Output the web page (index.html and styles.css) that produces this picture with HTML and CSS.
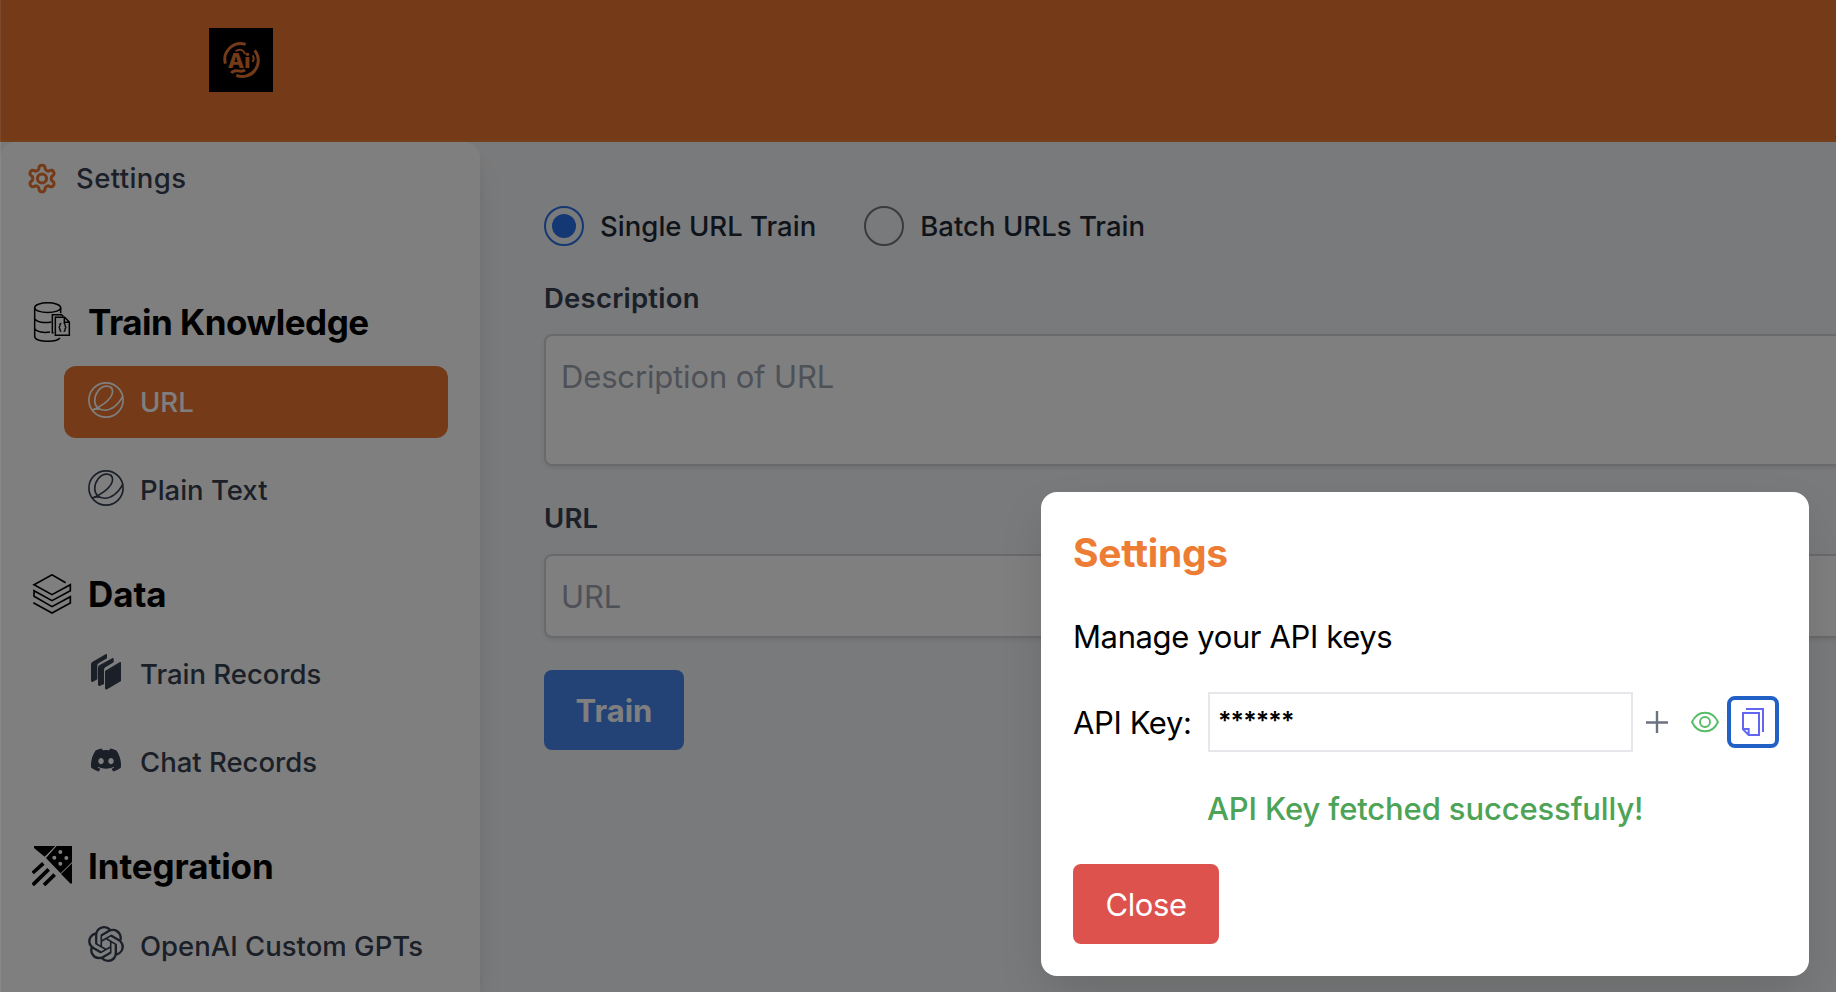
FILE: index.html
```
<!DOCTYPE html>
<html lang="en">
<head>
<meta charset="utf-8">
<title>Settings</title>
<link rel="stylesheet" href="styles.css">
</head>
<body>
<div class="app">
  <header class="header">
    <svg class="logo" viewBox="0 0 192 192">
      <rect width="192" height="192" fill="#000"/>
      <g fill="none" stroke="#ea7632" stroke-width="9">
        <path d="M110 49A48 48 0 0 0 49 107"/>
        <path d="M137 67A48 48 0 0 1 82 142"/>
        <path d="M67 135C78 118 92 137 108 126"/>
        <path d="M80 70C92 60 104 66 108 78" stroke-width="6"/>
        <path d="M131 82q6 8 0 20" stroke-width="6"/>
      </g>
      <text class="logo-text" x="56" y="119" textLength="68" lengthAdjust="spacingAndGlyphs">Ai</text>
    </svg>
  </header>
  <div class="body">
    <nav class="sidebar">
      <a class="settings-link">
        <svg class="gear" viewBox="0 0 24 24" fill="none" stroke="currentColor" stroke-width="2.3" stroke-linejoin="round"><path d="M12.22 2h-.44a2 2 0 0 0-2 2v.18a2 2 0 0 1-1 1.73l-.43.25a2 2 0 0 1-2 0l-.15-.08a2 2 0 0 0-2.73.73l-.22.38a2 2 0 0 0 .73 2.73l.15.1a2 2 0 0 1 1 1.72v.51a2 2 0 0 1-1 1.74l-.15.09a2 2 0 0 0-.73 2.73l.22.38a2 2 0 0 0 2.73.73l.15-.08a2 2 0 0 1 2 0l.43.25a2 2 0 0 1 1 1.73V20a2 2 0 0 0 2 2h.44a2 2 0 0 0 2-2v-.18a2 2 0 0 1 1-1.73l.43-.25a2 2 0 0 1 2 0l.15.08a2 2 0 0 0 2.73-.73l.22-.39a2 2 0 0 0-.73-2.73l-.15-.08a2 2 0 0 1-1-1.74v-.5a2 2 0 0 1 1-1.74l.15-.09a2 2 0 0 0 .73-2.73l-.22-.38a2 2 0 0 0-2.73-.73l-.15.08a2 2 0 0 1-2 0l-.43-.25a2 2 0 0 1-1-1.73V4a2 2 0 0 0-2-2z"/><circle cx="12" cy="12" r="3.4"/></svg>
        <span>Settings</span>
      </a>
      <section class="group">
        <h2 class="group-title">
          <svg class="group-icon" viewBox="0 0 120 120" fill="none" stroke="#000" stroke-width="4.5"><ellipse cx="47" cy="17" rx="39" ry="14.5"/><path d="M8 17V104C10 121 72 122 84 108M86 17V34M8 50C14 61 38 64 58 60M8 80C14 90 36 93 54 90"/><path d="M65 92H61V38H88L94 43"/><path d="M70 46H98L112 60V100H70ZM97 46V61H112"/><path d="M88 64q-5 0-4 6q0 5-4 6q4 1 4 6q-1 6 4 6M95 64q5 0 4 6q0 5 4 6q-4 1-4 6q1 6-4 6" stroke-width="4"/></svg>
          <span class="tight">Train Knowledge</span>
        </h2>
        <a class="item item-active">
          <svg class="item-icon" viewBox="0 0 24 24" fill="none" stroke="currentColor" stroke-width="1.1"><circle cx="12" cy="12" r="11.4"/><path d="M2.7 18.7C7 17.4 16.4 11.8 16.4 6.4C16.4 4 14.8 2.7 12.4 2.7C8 2.7 4.5 7.8 4.5 12.4C4.5 16.4 7.2 18.8 11 18.8C16.4 18.8 20.2 15 23.2 9.6M2.7 18.7C5 17.8 6.6 17.6 8.2 18.2"/></svg>
          <span>URL</span>
        </a>
        <a class="item">
          <svg class="item-icon" viewBox="0 0 24 24" fill="none" stroke="currentColor" stroke-width="1.1"><circle cx="12" cy="12" r="11.4"/><path d="M2.7 18.7C7 17.4 16.4 11.8 16.4 6.4C16.4 4 14.8 2.7 12.4 2.7C8 2.7 4.5 7.8 4.5 12.4C4.5 16.4 7.2 18.8 11 18.8C16.4 18.8 20.2 15 23.2 9.6M2.7 18.7C5 17.8 6.6 17.6 8.2 18.2"/></svg>
          <span>Plain Text</span>
        </a>
      </section>
      <section class="group">
        <h2 class="group-title">
          <svg class="group-icon" viewBox="0 0 120 120" fill="none" stroke="#000" stroke-width="5"><path d="M101 26L60 2.500L6 32L60 62L115 32V50L60 80L6 50V67L60 98L115 68V87L60 117L4 86"/></svg>
          <span>Data</span>
        </h2>
        <a class="item">
          <svg class="item-icon" viewBox="0 0 108 108" fill="currentColor" stroke="currentColor" stroke-width="4" stroke-linejoin="round"><path d="M53 52L97 26V80L55 105L53 103Z"/><path d="M32 41Q32 37 36 35L75 14V24L51 38Q46 41 46 47V89L34 94L32 92Z"/><path d="M11 31Q11 27 15 25L55 2V12L32 25Q26 28 26 34V75L13 82L11 80Z"/></svg>
          <span>Train Records</span>
        </a>
        <a class="item">
          <svg class="item-icon discord" viewBox="0 0 16 16" fill="currentColor"><path d="M13.545 2.907a13.227 13.227 0 0 0-3.257-1.011.05.05 0 0 0-.052.025c-.141.25-.297.577-.406.833a12.19 12.19 0 0 0-3.658 0 8.258 8.258 0 0 0-.412-.833.051.051 0 0 0-.052-.025c-1.125.194-2.22.534-3.257 1.011a.041.041 0 0 0-.021.018C.356 6.024-.213 9.047.066 12.032c.001.014.01.028.021.037a13.276 13.276 0 0 0 3.995 2.02.05.05 0 0 0 .056-.019c.308-.42.582-.863.818-1.329a.05.05 0 0 0-.01-.059.051.051 0 0 0-.018-.011 8.875 8.875 0 0 1-1.248-.595.05.05 0 0 1-.02-.066.051.051 0 0 1 .015-.019c.084-.063.168-.129.248-.195a.05.05 0 0 1 .051-.007c2.619 1.196 5.454 1.196 8.041 0a.052.052 0 0 1 .053.007c.08.066.164.132.248.195a.051.051 0 0 1-.004.085 8.254 8.254 0 0 1-1.249.594.05.05 0 0 0-.03.03.052.052 0 0 0 .003.041c.24.465.515.909.817 1.329a.05.05 0 0 0 .056.019 13.235 13.235 0 0 0 4.001-2.02.049.049 0 0 0 .021-.037c.334-3.451-.559-6.449-2.366-9.106a.034.034 0 0 0-.02-.019Zm-8.198 7.307c-.789 0-1.438-.724-1.438-1.612 0-.889.637-1.613 1.438-1.613.807 0 1.45.73 1.438 1.613 0 .888-.637 1.612-1.438 1.612Zm5.316 0c-.788 0-1.438-.724-1.438-1.612 0-.889.637-1.613 1.438-1.613.807 0 1.451.73 1.438 1.613 0 .888-.631 1.612-1.438 1.612Z"/></svg>
          <span>Chat Records</span>
        </a>
      </section>
      <section class="group">
        <h2 class="group-title">
          <svg class="group-icon" viewBox="0 0 120 120"><path d="M6 0H70L38 32L6 6ZM74 0H120V48L86 82L42 36ZM87 84L120 52V112L116 113Z"/><g fill="#fff"><circle cx="85" cy="18" r="6"/><circle cx="67" cy="35" r="6"/><circle cx="103" cy="36" r="6"/><circle cx="85" cy="53" r="6"/></g><path d="M2 81L34 52M2 117L50 70M36 117L68 86" stroke="#000" stroke-width="11"/></svg>
          <span>Integration</span>
        </h2>
        <a class="item">
          <svg class="item-icon" viewBox="0 0 24 24" fill="currentColor"><path d="M22.2819 9.8211a5.9847 5.9847 0 0 0-.5157-4.9108 6.0462 6.0462 0 0 0-6.5098-2.9A6.0651 6.0651 0 0 0 4.9807 4.1818a5.9847 5.9847 0 0 0-3.9977 2.9 6.0462 6.0462 0 0 0 .7427 7.0966 5.98 5.98 0 0 0 .511 4.9107 6.051 6.051 0 0 0 6.5146 2.9001A5.9847 5.9847 0 0 0 13.2599 24a6.0557 6.0557 0 0 0 5.7718-4.2058 5.9894 5.9894 0 0 0 3.9977-2.9001 6.0557 6.0557 0 0 0-.7475-7.0729zm-9.022 12.6081a4.4755 4.4755 0 0 1-2.8764-1.0408l.1419-.0804 4.7783-2.7582a.7948.7948 0 0 0 .3927-.6813v-6.7369l2.02 1.1686a.071.071 0 0 1 .038.052v5.5826a4.504 4.504 0 0 1-4.4945 4.4944zm-9.6607-4.1254a4.4708 4.4708 0 0 1-.5346-3.0137l.142.0852 4.783 2.7582a.7712.7712 0 0 0 .7806 0l5.8428-3.3685v2.3324a.0804.0804 0 0 1-.0332.0615L9.74 19.9502a4.4992 4.4992 0 0 1-6.1408-1.6464zM2.3408 7.8956a4.485 4.485 0 0 1 2.3655-1.9728V11.6a.7664.7664 0 0 0 .3879.6765l5.8144 3.3543-2.0201 1.1685a.0757.0757 0 0 1-.071 0l-4.8303-2.7865A4.504 4.504 0 0 1 2.3408 7.872zm16.5963 3.8558L13.1038 8.364 15.1192 7.2a.0757.0757 0 0 1 .071 0l4.8303 2.7913a4.4944 4.4944 0 0 1-.6765 8.1042v-5.6772a.79.79 0 0 0-.407-.667zm2.0107-3.0231l-.142-.0852-4.7735-2.7818a.7759.7759 0 0 0-.7854 0L9.409 9.2297V6.8974a.0662.0662 0 0 1 .0284-.0615l4.8303-2.7866a4.4992 4.4992 0 0 1 6.6802 4.66zM8.3065 12.863l-2.02-1.1638a.0804.0804 0 0 1-.038-.0567V6.0742a4.4992 4.4992 0 0 1 7.3757-3.4537l-.142.0805L8.704 5.459a.7948.7948 0 0 0-.3927.6813zm1.0976-2.3654l2.602-1.4998 2.6069 1.4998v2.9994l-2.5974 1.4997-2.6067-1.4997Z"/></svg>
          <span>OpenAI Custom GPTs</span>
        </a>
      </section>
    </nav>
    <main class="main">
      <div class="radios">
        <label class="radio"><span class="dot dot-on"></span><span>Single URL Train</span></label>
        <label class="radio"><span class="dot"></span><span>Batch URLs Train</span></label>
      </div>
      <div class="label">Description</div>
      <div class="field field-area">Description of URL</div>
      <div class="label">URL</div>
      <div class="field">URL</div>
      <button class="train">Train</button>
    </main>
  </div>
</div>
<div class="overlay">
  <div class="modal">
    <h1 class="modal-title">Settings</h1>
    <p class="modal-text">Manage your API keys</p>
    <div class="key-row">
      <span class="key-label">API Key:</span>
      <div class="key-input">******</div>
      <svg class="plus" viewBox="0 0 22 22" stroke="#6b7280" stroke-width="2.4" fill="none"><path d="M11 0V22M0 11.500H22"/></svg>
      <svg class="eye" viewBox="0 0 28 22" stroke="#55bd66" stroke-width="1.900" fill="none"><path d="M1 11C4 4.500 8.500 1.700 14 1.700S24 4.500 27 11C24 17.500 19.500 20.300 14 20.300S4 17.500 1 11Z"/><circle cx="14" cy="11" r="5"/></svg>
      <button class="copy"><svg class="copy-icon" viewBox="0 0 66 84" fill="none" stroke="#6366f1" stroke-width="6"><path d="M12 3H63V72M3 15H51V81H20L3 64ZM3 63H20V81"/></svg></button>
    </div>
    <p class="message">API Key fetched successfully!</p>
    <button class="close">Close</button>
  </div>
</div>
</body>
</html>
```
FILE: styles.css
```
* { box-sizing: border-box; margin: 0; }
body {
  position: relative;
  width: 1836px;
  height: 992px;
  overflow: hidden;
  font-family: Inter, "Liberation Sans", sans-serif;
  background: #f3f4f6;
}
svg { display: block; flex: none; }
button { border: 0; font-family: inherit; }

.app { height: 992px; display: flex; flex-direction: column; }
.header {
  height: 142px;
  flex: none;
  padding: 28px 0 0 209px;
  background: #ea7632;
  border-bottom: 2px solid #e68036;
}
.logo { width: 64px; height: 64px; }
.logo-text { font: 800 60px Inter, sans-serif; fill: #ea7632; }

.body { flex: 1; display: flex; min-height: 0; }
.sidebar {
  width: 480px;
  flex: none;
  background: #fff;
  border-radius: 16px 16px 0 0;
  box-shadow: 0 20px 30px -6px rgba(0, 0, 0, .1), 0 8px 12px -4px rgba(0, 0, 0, .1);
  color: #374151;
  font-size: 27.5px;
  font-weight: 500;
  overflow: hidden;
}
.settings-link {
  display: flex;
  align-items: center;
  gap: 18px;
  height: 72px;
  margin-bottom: 88px;
  padding-left: 26px;
  letter-spacing: .4px;
}
.gear { width: 32px; height: 33px; color: #ea7632; }
.group { margin-bottom: 48px; }
.group-title {
  display: flex;
  align-items: center;
  gap: 16px;
  height: 40px;
  margin-bottom: 24px;
  padding-left: 32px;
  color: #000;
  font-size: 35px;
  font-weight: 650;
  letter-spacing: -.1px;
}
.tight { letter-spacing: -.5px; }
.group-icon { width: 40px; height: 40px; }
.item {
  display: flex;
  align-items: center;
  gap: 16px;
  width: 384px;
  height: 72px;
  margin: 0 0 16px 64px;
  padding-left: 24px;
  border-radius: 12px;
  white-space: nowrap;
}
.item-active { background: #ea7632; color: #fff; }
.item-icon { width: 36px; height: 36px; margin-bottom: 4px; }
.discord { width: 30px; height: 30px; margin-left: 3px; margin-right: 3px; }

.main { flex: 1; min-width: 0; padding: 64px 0 0 64px; overflow: hidden; }
.radios { display: flex; gap: 48px; height: 40px; }
.radio {
  display: flex;
  align-items: center;
  gap: 16px;
  color: #1f2937;
  font-size: 27.5px;
  font-weight: 500;
  letter-spacing: .03px;
}
.dot {
  width: 40px;
  height: 40px;
  padding: 6px;
  border: 2px solid #767676;
  border-radius: 50%;
}
.dot-on { border-color: #2870e6; }
.dot-on::before {
  content: "";
  display: block;
  width: 24px;
  height: 24px;
  border-radius: 50%;
  background: #2870e6;
}
.label {
  margin: 32px 0 16px;
  color: #374151;
  font-size: 27.5px;
  font-weight: 600;
  line-height: 40px;
  letter-spacing: .22px;
}
.field {
  width: 1400px;
  height: 84px;
  padding: 17px 15px;
  border: 2px solid #d1d5db;
  border-radius: 8px;
  background: #fff;
  box-shadow: 0 2px 4px rgba(0, 0, 0, .08);
  color: #9ca3af;
  font-size: 31px;
  line-height: 48px;
  letter-spacing: -.15px;
}
.field-area { height: 132px; }
.train {
  display: block;
  width: 140px;
  height: 80px;
  margin-top: 32px;
  border-radius: 8px;
  background: #4784ed;
  color: #fff;
  font-size: 31px;
  font-weight: 650;
}

/* Modal layer over the page */
.overlay {
  position: absolute;
  inset: 0;
  display: flex;
  justify-content: flex-end;
  align-items: flex-end;
  padding: 0 27px 16px 0;
  background: rgba(0, 0, 0, .5);
  border-left: 1px solid rgba(255, 255, 255, .08);
}
.modal {
  width: 768px;
  height: 484px;
  padding: 32px;
  border-radius: 16px;
  background: #fff;
  box-shadow: 0 20px 50px -6px rgba(0, 0, 0, .14);
  font-size: 31px;
  line-height: 50px;
  color: #000;
}
.modal-title {
  height: 56px;
  margin-bottom: 32px;
  color: #ed7d35;
  font-size: 39px;
  font-weight: 650;
  line-height: 57px;
  letter-spacing: -.3px;
}
.modal-text { height: 48px; letter-spacing: -.38px; }
.key-row { display: flex; align-items: center; height: 60px; margin: 32px 0; }
.key-label { width: 135px; flex: none; padding-top: 1px; letter-spacing: -.4px; }
.key-input {
  width: 425px;
  height: 60px;
  flex: none;
  padding: 0 8px;
  border: 2px solid #e5e7eb;
  font-size: 25px;
  font-weight: 600;
  line-height: 54px;
  letter-spacing: -.9px;
}
.plus { width: 22px; height: 22px; margin: 0 23px 0 13px; }
.eye { width: 28px; height: 22px; margin-right: 8px; }
.copy {
  width: 52px;
  height: 52px;
  flex: none;
  padding: 8px 11px;
  border: 4px solid #2161c5;
  border-radius: 8px;
  background: #fff;
}
.copy-icon { width: 22px; height: 28px; }
.message {
  height: 48px;
  margin: 0 0 32px 134px;
  color: #4da356;
  font-weight: 500;
  letter-spacing: -.13px;
}
.close {
  display: block;
  width: 146px;
  height: 80px;
  border-radius: 8px;
  background: #dd524c;
  color: #fff;
  font-size: 31px;
  letter-spacing: -.4px;
}
```
